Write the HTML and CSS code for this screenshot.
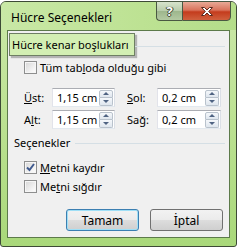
FILE: index.html
```html
<!DOCTYPE html>
<html>
<head>
  <title>Hücre Seçenekleri</title>
  <link rel="stylesheet" href="styles.css">
</head>
<body>

<div class="window">
  <div class="titlebar">
    <span class="title">Hücre Seçenekleri</span>
    <div class="caption">
      <div class="cap help">?</div>
      <div class="cap close">
        <svg width="14" height="11" viewBox="0 0 14 11">
          <path d="M1.5 1.5 L4.5 1.5 L7 4 L9.5 1.5 L12.5 1.5 L8.7 5.5 L12.5 9.5 L9.5 9.5 L7 7 L4.5 9.5 L1.5 9.5 L5.3 5.5 Z" fill="#fff" stroke="#5a2a1e" stroke-width="1"/>
        </svg>
      </div>
    </div>
  </div>

  <div class="client">
    <!-- Kenar boşlukları -->
    <div class="group-head">
      <div class="tooltip">Hücre kenar boşlukları</div>
      <div class="rule"></div>
    </div>

    <div class="check first">
      <span class="box"></span>
      <span>Tüm tab<u>l</u>oda olduğu gibi</span>
    </div>

    <div class="margins">
      <span class="lbl"><u>Ü</u>st:</span>
      <div class="spin">
        <span class="val">1,15 cm</span>
        <div class="arrows"><span class="up"></span><span class="down"></span></div>
      </div>
      <span class="lbl"><u>S</u>ol:</span>
      <div class="spin">
        <span class="val">0,2 cm</span>
        <div class="arrows"><span class="up"></span><span class="down"></span></div>
      </div>

      <span class="lbl">A<u>l</u>t:</span>
      <div class="spin">
        <span class="val">1,15 cm</span>
        <div class="arrows"><span class="up"></span><span class="down"></span></div>
      </div>
      <span class="lbl">Sa<u>ğ</u>:</span>
      <div class="spin">
        <span class="val">0,2 cm</span>
        <div class="arrows"><span class="up"></span><span class="down"></span></div>
      </div>
    </div>

    <!-- Seçenekler -->
    <div class="group-head plain">
      <span class="head-text">Seçenekler</span>
      <div class="rule"></div>
    </div>

    <div class="check wrap">
      <span class="box checked">
        <svg width="9" height="9" viewBox="0 0 9 9">
          <path d="M1 4.5 L3.5 7 L8 1" fill="none" stroke="#3f5a8f" stroke-width="2"/>
        </svg>
      </span>
      <span><u>M</u>etni kaydır</span>
    </div>
    <div class="check fit">
      <span class="box"></span>
      <span>Me<u>t</u>ni sığdır</span>
    </div>

    <div class="buttons">
      <div class="btn default">Tamam</div>
      <div class="btn">İptal</div>
    </div>
  </div>
</div>

</body>
</html>
```

FILE: styles.css
```css
body {
  margin: 0;
  background: #ffffff;
  font-family: "Noto Sans", sans-serif;
  font-size: 11px;
  color: #000;
}

.window {
  width: 235px;
  height: 244px;
  margin-top: 1px;
  border: 1px solid #3d4a36;
  border-radius: 6px 6px 3px 3px;
  background: linear-gradient(to bottom, #cbe8a9 0%, #bfe396 40%, #a9d87a 100%);
  display: flex;
  flex-direction: column;
}

.titlebar {
  height: 28px;
  display: flex;
  justify-content: space-between;
  align-items: flex-start;
  background: linear-gradient(to right, #c9e8a6, #bde293 60%, #b4dd8a);
  border-radius: 5px 5px 0 0;
}

.title {
  padding: 7px 0 0 10px;
  font-size: 12px;
}

.caption {
  display: flex;
  margin: -1px 5px 0 0;
}

.cap {
  height: 20px;
  display: flex;
  align-items: center;
  justify-content: center;
  box-sizing: border-box;
  border: 1px solid #4a5842;
}

.help {
  width: 26px;
  border-right: none;
  border-radius: 0 0 0 4px;
  background: linear-gradient(to bottom, #d7e3cc 0%, #b8cbaa 50%, #9db68c 51%, #b3c9a2 100%);
  color: #fff;
  font-weight: bold;
  font-size: 13px;
  text-shadow: 0 0 1px #333, 1px 0 0 #44513c, -1px 0 0 #44513c, 0 1px 0 #44513c;
}

.close {
  width: 49px;
  border-radius: 0 0 4px 0;
  background: linear-gradient(to bottom, #e8a996 0%, #d9735b 45%, #c43c1d 55%, #d0603e 100%);
}

.client {
  flex: 1;
  margin: 0 6px 8px;
  border: 1px solid #5c7a4a;
  background: #f0f0f0;
  display: flex;
  flex-direction: column;
}

.group-head {
  display: flex;
  align-items: flex-start;
  margin: 2px 0 0 1px;
}

.tooltip {
  width: 122px;
  height: 21px;
  border: 1px solid #6e7f63;
  background: #d3efb3;
  padding-left: 2px;
  box-sizing: content-box;
  line-height: 21px;
  box-shadow: 2px 2px 1px rgba(0, 0, 0, 0.25);
  white-space: nowrap;
}

.rule {
  flex: 1;
  height: 1px;
  background: #d5dfe5;
  margin-right: 4px;
}

.group-head .rule {
  margin-top: 13px;
}

.group-head.plain {
  margin: 6px 0 0 6px;
  align-items: center;
}

.group-head.plain .rule {
  margin: 1px 4px 0 5px;
}

.check {
  display: flex;
  align-items: center;
  gap: 3px;
  margin-left: 16px;
  height: 15px;
}

.check.first { margin-top: 4px; }
.check.wrap { margin-top: 10px; }
.check.fit { margin-top: 4px; }

.box {
  width: 13px;
  height: 13px;
  box-sizing: border-box;
  border: 1px solid #8e8f8f;
  background: linear-gradient(135deg, #d6d6d6 0%, #f4f4f4 70%, #ffffff 100%);
  box-shadow: inset 0 0 0 1px #f6f6f6;
  display: flex;
  align-items: center;
  justify-content: center;
}

.margins {
  display: grid;
  grid-template-columns: 28px 63px 12px 30px 64px;
  row-gap: 3px;
  margin: 13px 0 0 16px;
  align-items: center;
}

.margins .lbl:nth-of-type(2),
.margins .lbl:nth-of-type(4) {
  grid-column: 4;
}

.spin {
  height: 19px;
  box-sizing: border-box;
  border: 1px solid #abadb3;
  border-color: #abadb3 #dbdfe6 #e3e9ef #e2e3ea;
  background: #fff;
  display: flex;
  align-items: center;
  justify-content: space-between;
  padding: 0 1px 0 4px;
}

.arrows {
  display: flex;
  flex-direction: column;
  width: 14px;
}

.arrows span {
  height: 8px;
  box-sizing: border-box;
  border: 1px solid #b9c2cc;
  background: linear-gradient(to bottom, #f5f8fb, #dfe6ee);
  display: flex;
  align-items: center;
  justify-content: center;
}

.arrows .up { border-radius: 2px 2px 0 0; }
.arrows .down { border-radius: 0 0 2px 2px; border-top: none; }

.arrows .up::after {
  content: "";
  border-left: 3px solid transparent;
  border-right: 3px solid transparent;
  border-bottom: 3px solid #4f6382;
}

.arrows .down::after {
  content: "";
  border-left: 3px solid transparent;
  border-right: 3px solid transparent;
  border-top: 3px solid #4f6382;
}

.buttons {
  display: flex;
  justify-content: flex-end;
  gap: 11px;
  margin: 15px 6px 0 0;
}

.btn {
  width: 73px;
  height: 22px;
  box-sizing: border-box;
  border: 1px solid #707070;
  border-radius: 3px;
  background: linear-gradient(to bottom, #f2f2f2 0%, #ebebeb 49%, #dddddd 50%, #cfcfcf 100%);
  display: flex;
  align-items: center;
  justify-content: center;
  font-size: 12px;
}

.btn.default {
  border-color: #3c7fb1;
  box-shadow: inset 0 0 0 1px #9fdff6;
}
```
